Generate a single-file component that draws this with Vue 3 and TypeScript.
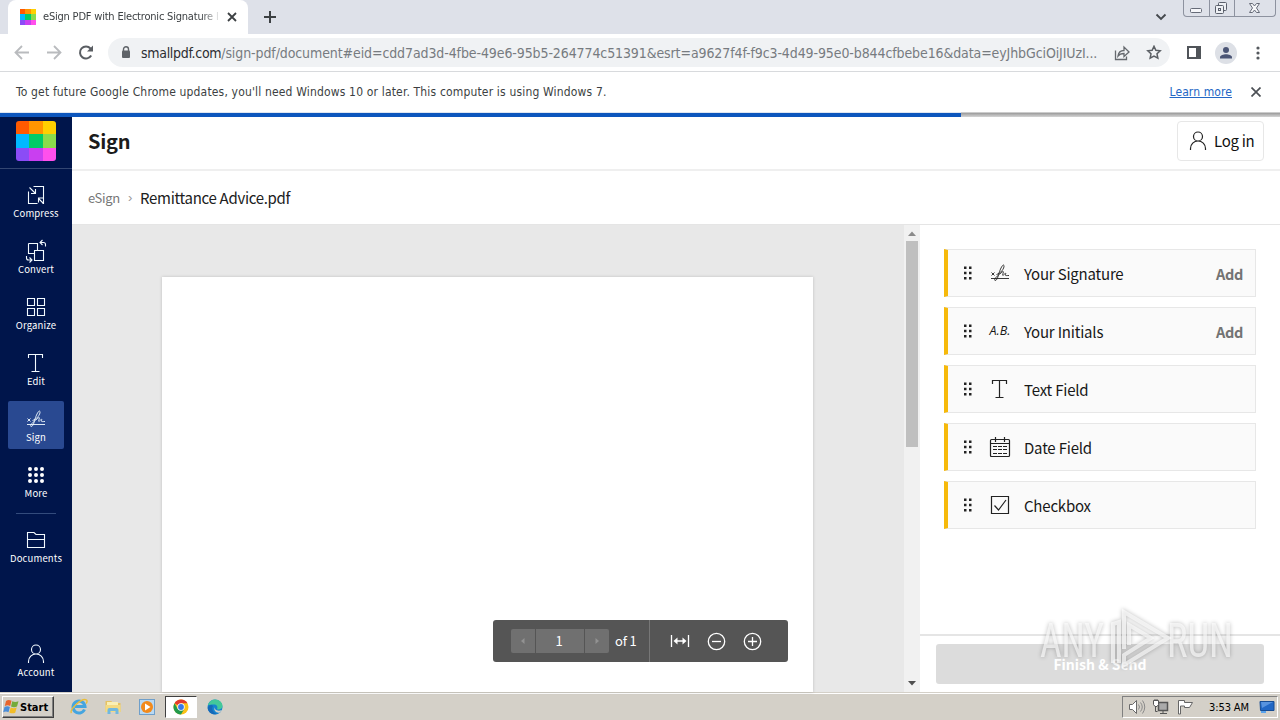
<template>
  <div class="screen">
    <header class="tab-strip">
      <div class="tab">
        <span class="brand brand-small">
          <i v-for="c in brandColors" :key="c" :style="{ background: c }"></i>
        </span>
        <span class="tab-title">eSign PDF with Electronic Signature F</span>
        <svg class="tab-close" width="10" height="10" viewBox="0 0 10 10"><path d="M1 1l8 8M9 1l-8 8" stroke="#3c4043" stroke-width="1.8" /></svg>
      </div>
      <svg class="new-tab" width="12" height="12" viewBox="0 0 12 12"><path d="M6 0v12M0 6h12" stroke="#3c4043" stroke-width="2" /></svg>
      <svg class="tab-search" width="12" height="8" viewBox="0 0 12 8"><path d="M1.5 1.5L6 6l4.500-4.500" fill="none" stroke="#45494e" stroke-width="1.9" /></svg>
      <div class="win-controls">
        <span class="win-btn"><svg width="25" height="16" viewBox="0 0 25 16"><rect x="6.500" y="8.500" width="11" height="4" rx="1" fill="#f5f6f9" stroke="#666b78" /></svg></span>
        <span class="win-btn"><svg width="24" height="16" viewBox="0 0 24 16" fill="#eef0f4" stroke="#5b606c"><rect x="8.500" y="2.500" width="8" height="8" rx="1" /><rect x="5.500" y="5.500" width="8" height="8" rx="1" /><rect x="8.500" y="8.500" width="2" height="2" /></svg></span>
        <span class="win-btn"><svg width="41" height="16" viewBox="0 0 41 16"><path d="M14.500 3.500h3l2 2.500 2-2.500h3l-3 4.500 3 4.500h-3l-2-2.500-2 2.500h-3l3-4.500z" fill="#f5f6f9" stroke="#666b78" /></svg></span>
      </div>
    </header>

    <div class="address-row">
      <svg class="nav-icon" width="16" height="16" viewBox="0 0 16 16"><path d="M15 7.500H2M8 1L1.500 7.500 8 14" fill="none" stroke="#b9bbbe" stroke-width="1.800" /></svg>
      <svg class="nav-icon" width="16" height="16" viewBox="0 0 16 16"><path d="M1 7.500h13M8 1L14.500 7.500 8 14" fill="none" stroke="#b9bbbe" stroke-width="1.800" /></svg>
      <svg class="nav-icon" width="16" height="16" viewBox="0 0 16 16"><path d="M13.200 10.500A6 6 0 1 1 12.500 3.500L14 5" fill="none" stroke="#5a5e63" stroke-width="2" /><path d="M15 .5v6H9z" fill="#5a5e63" /></svg>
      <div class="omnibox">
        <svg width="10" height="13" viewBox="0 0 10 13"><rect x="1" y="4.500" width="8" height="7.500" rx="1" fill="#5f6368" /><path d="M2.500 5V3.300a2.500 2.500 0 0 1 5 0V5" fill="none" stroke="#5f6368" stroke-width="1.400" /></svg>
        <span class="url"><b>smallpdf.com</b>/sign-pdf/document#eid=cdd7ad3d-4fbe-49e6-95b5-264774c51391&amp;esrt=a9627f4f-f9c3-4d49-95e0-b844cfbebe16&amp;data=eyJhbGciOiJIUzI...</span>
        <svg class="share" width="16" height="16" viewBox="0 0 16 16" fill="none" stroke="#65696e" stroke-width="1.300"><path d="M1.500 5.500v9h11v-3" /><path d="M4 11c.5-4 3-5.500 6-5.500V2l5 5-5 4.500V8.500C7.500 8.500 5.500 9 4 11z" /></svg>
        <svg class="star" width="16" height="16" viewBox="0 0 16 16"><path d="M8 1.300l1.850 4 4.350.5-3.200 3 .85 4.300L8 11l-3.850 2.100.85-4.300-3.200-3 4.350-.5z" fill="none" stroke="#5a5e63" stroke-width="1.500" /></svg>
      </div>
      <svg class="side-panel" width="14" height="14" viewBox="0 0 14 14"><rect x="1" y="1" width="12" height="11" fill="none" stroke="#505459" stroke-width="2" /><path d="M9 1h4v11H9z" fill="#505459" /></svg>
      <svg class="avatar" width="22" height="22" viewBox="0 0 22 22"><circle cx="11" cy="11" r="11" fill="#dde0e6" /><circle cx="11" cy="8" r="3" fill="#4b5575" /><path d="M5 16.500v-1.300c0-2 3.500-3 6-3s6 1 6 3v1.300z" fill="#4b5575" /></svg>
      <svg class="kebab" width="4" height="14" viewBox="0 0 4 14" fill="#55595e"><circle cx="2" cy="2" r="1.600" /><circle cx="2" cy="7" r="1.600" /><circle cx="2" cy="12" r="1.600" /></svg>
    </div>

    <div class="infobar">
      <span class="info-text">To get future Google Chrome updates, you'll need Windows 10 or later. This computer is using Windows 7.</span>
      <a class="learn-more">Learn more</a>
      <svg width="10" height="10" viewBox="0 0 10 10"><path d="M.5.5l9 9M9.500.5l-9 9" stroke="#4c5055" stroke-width="1.700" /></svg>
    </div>
    <div class="progress"><div class="progress-value" :style="{ width: progress + 'px' }"></div></div>

    <div class="app">
      <nav class="sidebar">
        <div class="logo">
          <span class="brand">
            <i v-for="c in brandColors" :key="c" :style="{ background: c }"></i>
          </span>
        </div>
        <div class="tools">
          <a v-for="tool in tools" :key="tool.label" class="tool" :class="{ active: tool.label === 'Sign' }">
            <svg width="24" height="24" viewBox="0 0 24 24" :class="tool.icon"><path :d="icons[tool.icon]" /></svg>
            <span>{{ tool.label }}</span>
          </a>
        </div>
        <div class="separator"></div>
        <a class="tool">
          <svg width="24" height="24" viewBox="0 0 24 24"><path :d="icons.folder" /></svg>
          <span>Documents</span>
        </a>
        <a class="tool account">
          <svg width="24" height="24" viewBox="0 0 24 24"><path :d="icons.user" /></svg>
          <span>Account</span>
        </a>
      </nav>

      <main class="main">
        <div class="title-bar">
          <h1>Sign</h1>
          <button class="login">
            <svg width="24" height="24" viewBox="0 0 24 24"><path :d="icons.user" /></svg>
            <span>Log in</span>
          </button>
        </div>
        <div class="breadcrumb">
          <span class="crumb">eSign</span>
          <span class="chevron">›</span>
          <span class="file">Remittance Advice.pdf</span>
        </div>
        <div class="workspace">
          <div class="viewer">
            <div class="canvas"><div class="sheet"></div></div>
            <div class="scrollbar">
              <svg width="16" height="16" viewBox="0 0 16 16"><path d="M4 11l4-4.500 4 4.500z" fill="#8b8b8b" /></svg>
              <div class="thumb"></div>
              <svg width="16" height="16" viewBox="0 0 16 16"><path d="M4 5l4 4.500L12 5z" fill="#505050" /></svg>
            </div>
            <div class="page-controls">
              <div class="pager">
                <span class="step"><svg width="6" height="8" viewBox="0 0 6 8"><path d="M4.500 1v6L1 4z" fill="#929292" /></svg></span>
                <span class="page-no">1</span>
                <span class="step"><svg width="6" height="8" viewBox="0 0 6 8"><path d="M1.500 1v6L5 4z" fill="#929292" /></svg></span>
              </div>
              <span class="total">of 1</span>
              <div class="zoom">
                <svg width="20" height="20" viewBox="0 0 20 20"><path d="M1.500 4v12M18.500 4v12M5 10h10" /><path d="M3.500 10l4-3.500v7zM16.500 10l-4-3.500v7z" fill="#fff" stroke="none" /></svg>
                <svg width="20" height="20" viewBox="0 0 20 20"><circle cx="10.500" cy="10.500" r="8.200" /><path d="M6 10.500h9" /></svg>
                <svg width="20" height="20" viewBox="0 0 20 20"><circle cx="10.500" cy="10.500" r="8.200" /><path d="M6 10.500h9M10.500 6v9" /></svg>
              </div>
            </div>
          </div>

          <aside class="panel">
            <div class="fields">
              <div v-for="field in fields" :key="field.label" class="field">
                <svg class="grip" width="10" height="16" viewBox="0 0 10 16"><path d="M1 1.500h2.500v2.500H1zM6 1.500h2.500v2.500H6zM1 6.700h2.500v2.500H1zM6 6.700h2.500v2.500H6zM1 12h2.500v2.500H1zM6 12h2.500v2.500H6z" fill="#222" /></svg>
                <span v-if="field.icon === 'initials'" class="initials">A.B.</span>
                <svg v-else class="field-icon" :class="field.icon" width="24" height="24" viewBox="0 0 24 24"><path :d="icons[field.icon]" /></svg>
                <span class="field-label">{{ field.label }}</span>
                <span v-if="field.addable" class="add">Add</span>
              </div>
            </div>
            <div class="panel-footer"><button class="finish">Finish &amp; Send</button></div>
          </aside>
        </div>
      </main>
    </div>

    <footer class="taskbar">
      <button class="start">
        <svg width="17" height="16" viewBox="0 0 17 16"><path d="M3 2c2-1.500 3.500-1.200 5.500-.2L7.200 7C5.500 6 4 6 1.800 7z" fill="#e8642c" /><path d="M9.300 2.200c2 1 3.800 1 6.200 0L14 7.500c-2.200 1-4 .8-6 0z" fill="#75ab3c" /><path d="M1.500 8c2-1 3.600-1 5.400 0l-1.400 5.200c-1.800-1-3.300-1-5.300 0z" fill="#4a8dd8" /><path d="M7.700 8.500c2 .9 3.800.9 6 0l-1.500 5.200c-2 1-4 .8-5.900-.2z" fill="#f2bd28" /></svg>
        <span>Start</span>
      </button>
      <div class="launchers">
        <span class="launcher"><svg width="18" height="18" viewBox="0 0 18 18"><path d="M14.500 11.500A6 6 0 1 1 15 8.500H5" fill="none" stroke="#45a5df" stroke-width="3" /><path d="M1.500 15C-1 12 12-1 16.500 2c1 1 .4 2.500-.3 3.500" fill="none" stroke="#e9bd39" stroke-width="1.400" /></svg></span>
        <span class="launcher"><svg width="18" height="18" viewBox="0 0 18 18"><path d="M1.500 3h6l1 2h8v9h-15z" fill="#e6c262" /><path d="M3 4h11v4H3z" fill="#f9efb5" /><path d="M1.500 7h15v7h-15z" fill="#f3da83" /><path d="M3.500 16v-4q0-2 2-2h7q2 0 2 2v4h-3v-3h-5v3z" fill="#71b8df" /></svg></span>
        <span class="launcher"><svg width="18" height="18" viewBox="0 0 18 18"><rect x="1.500" y="1.500" width="15" height="15" fill="#b9d9f3" stroke="#6f9fca" /><circle cx="9" cy="9" r="6" fill="#f28a1c" /><path d="M7 5.500v7L12.500 9z" fill="#fff" /></svg></span>
        <span class="launcher pressed"><svg width="16" height="16" viewBox="0 0 16 16"><circle cx="8" cy="8" r="7.500" fill="#fbc116" /><path d="M8 8L1.500 4.250A7.500 7.500 0 0 1 14.500 4.250H8z" fill="#e33b2e" /><path d="M1.500 4.250A7.500 7.500 0 0 0 8 15.500l3.200-5.600H4.750z" fill="#229a4c" /><circle cx="8" cy="8" r="3.700" fill="#fff" /><circle cx="8" cy="8" r="2.900" fill="#3979e8" /></svg></span>
        <span class="launcher"><svg width="16" height="16" viewBox="0 0 16 16"><circle cx="8" cy="8" r="7.500" fill="#1583cf" /><path d="M.8 6.200C2 2.500 5 .5 8 .5c4.500 0 7.500 3 7.500 6.500 0 3-3 4-5.500 3.200 1.500-3-1-5-3.500-4.700C4 5.600 2 6 .8 6.200z" fill="#43c89a" /><path d="M6 7c-2 3 0 7 4 8-5 1.500-9-2-9.300-6C1.500 6 4.500 5 6 7z" fill="#1669b8" /><path d="M8 8c-1 2 2 5 7 3l-2 2.500c-4 1-7-2.500-5-5.500z" fill="#d4d0c8" /></svg></span>
      </div>
      <div class="tray">
        <svg width="18" height="16" viewBox="0 0 18 16" fill="#fff" stroke="#696969"><path d="M1.500 5.500h3l4-4v13l-4-4h-3z" /><path d="M10.500 5.500q2 2.500 0 5M12.500 3.500q3.500 4.500 0 9M14.500 1.500q4.500 6.500 0 13" fill="none" stroke="#8a8a8a" /></svg>
        <svg width="18" height="16" viewBox="0 0 18 16" fill="#fff" stroke="#555"><path d="M3.500 7v5.500h2" fill="none" /><rect x="6.500" y="3.500" width="9" height="8" stroke-width="1.500" fill="#aaa" /><path d="M1.500 1.500h5v4l-1.500 2h-2l-1.500-2zM3 1v-1M5 1v-1M8 14.500h7M11 12v2" /></svg>
        <svg width="18" height="16" viewBox="0 0 18 16" fill="#fff" stroke="#666"><path d="M2.500 15V1.500h6v2h8l-3 5h-5v-1.500h-4V15z" /></svg>
        <span class="clock">3:53 AM</span>
        <svg class="desktop" width="16" height="14" viewBox="0 0 16 14"><path d="M1 1.500h14v9H1.500z" fill="#2167c5" stroke="#164c93" /><path d="M2 2h12L3 8z" fill="#5793df" /><path d="M2 12h5" stroke="#5ba4ec" stroke-width="2" /></svg>
      </div>
    </footer>

    <svg class="watermark" width="220" height="76" viewBox="0 0 220 76">
      <text x="5" y="55" textLength="64" lengthAdjust="spacingAndGlyphs">ANY</text>
      <path d="M78 61V22l6-2v41M89 47V10l44 26-44 27v-10l27-17-22-13v20" />
      <text x="132" y="55" textLength="66" lengthAdjust="spacingAndGlyphs">RUN</text>
    </svg>
  </div>
</template>

<script lang="ts" setup>
import { ref } from 'vue'

interface Tool {
  label: string
  icon: string
}

interface Field {
  label: string
  icon: string
  addable?: boolean
}

const progress = ref(961)

const brandColors = [
  '#ff5a00', '#ff9500', '#ffd000',
  '#00b8ff', '#00cc66', '#8bdc4b',
  '#8b4cf6', '#c93ff0', '#ff50ec'
]

const icons: Record<string, string> = {
  compress: 'M9.500 3.500h10v9M4.500 8.500v12h9M19.500 12.500v8h-1M5.500 4.500l6 6M11.500 6v4.500h-4.500M19.500 20.500l-5-5M14.500 19.500v-4.500h4.500',
  convert: 'M4.500 4.500h9v7M10.500 14.500h-6v-10M10.500 11.500h9v10h-9zM21.500 7.500v-2q0-2-2-2h-3M18.500 1L16 3.500 18.500 6M2.500 17v2q0 2 2 2h3M5.500 18.500L8 21l-2.500 2.500',
  organize: 'M3.500 3.500h7v7h-7zM13.500 3.500h7v7h-7zM3.500 13.500h7v7h-7zM13.500 13.500h7v7h-7z',
  text: 'M4.500 7V3.500h14V7M11.500 3.500v17M7.500 20.500h8',
  sign: 'M3 17.500h18M3.500 11.500l3 3M6.500 11.500l-3 3M8.500 13.500c4-1 8-6 7.500-9-1-2-3.500 3-5 7.500-1 4-2 7.500-4 7.500-1.500-1 2-4.500 6-7.500 2-2 3-2 2 .5-1 2.500 0 2 1 1 1.500-1.500 2.500-1.500 1.500 0-.5 1.500 1 1 3.500 1',
  more: 'M4 6a2 2 0 1 1 4 0a2 2 0 1 1-4 0M10 6a2 2 0 1 1 4 0a2 2 0 1 1-4 0M16 6a2 2 0 1 1 4 0a2 2 0 1 1-4 0M4 12a2 2 0 1 1 4 0a2 2 0 1 1-4 0M10 12a2 2 0 1 1 4 0a2 2 0 1 1-4 0M16 12a2 2 0 1 1 4 0a2 2 0 1 1-4 0M4 18a2 2 0 1 1 4 0a2 2 0 1 1-4 0M10 18a2 2 0 1 1 4 0a2 2 0 1 1-4 0M16 18a2 2 0 1 1 4 0a2 2 0 1 1-4 0',
  folder: 'M3.500 19.500v-15h6.500l2 2h8.500v13zM3.500 11.500h17',
  user: 'M12 3a4.500 4.500 0 0 1 0 9a4.500 4.500 0 0 1 0-9M4.500 21v-1.500a7.500 7.500 0 0 1 15 0V21',
  calendar: 'M3.500 4.500h17q1 0 1 1v15q0 1-1 1h-17q-1 0-1-1v-15q0-1 1-1zM2.500 8.500h19M7.500 2v5M16.500 2v5M5 11.500h4M10 11.500h4M15 11.500h4M5 14.500h4M10 14.500h4M15 14.500h4M5 18.500h4M10 18.500h4M15 18.500h4',
  checkbox: 'M3.500 3.500h17v17h-17zM6.500 12.500l4 4.500 7.500-10'
}

const tools = ref<Tool[]>([
  { label: 'Compress', icon: 'compress' },
  { label: 'Convert', icon: 'convert' },
  { label: 'Organize', icon: 'organize' },
  { label: 'Edit', icon: 'text' },
  { label: 'Sign', icon: 'sign' },
  { label: 'More', icon: 'more' }
])

const fields = ref<Field[]>([
  { label: 'Your Signature', icon: 'sign', addable: true },
  { label: 'Your Initials', icon: 'initials', addable: true },
  { label: 'Text Field', icon: 'text' },
  { label: 'Date Field', icon: 'calendar' },
  { label: 'Checkbox', icon: 'checkbox' }
])
</script>

<style>
body {
  margin: 0;
  overflow: hidden;
}
</style>

<style scoped>
* {
  box-sizing: border-box;
}

.screen {
  position: relative;
  width: 1280px;
  height: 720px;
  display: flex;
  flex-direction: column;
  background: #fff;
  font-family: "DejaVu Sans Condensed", "DejaVu Sans", sans-serif;
  font-stretch: condensed;
  overflow: hidden;
  white-space: nowrap;
}

svg {
  display: block;
  flex: none;
}

button {
  font-family: inherit;
  margin: 0;
  padding: 0;
}

/* Browser */
.tab-strip {
  height: 34px;
  flex: none;
  display: flex;
  align-items: center;
  padding-left: 8px;
  background: #dee1e9;
}

.tab {
  width: 240px;
  height: 34px;
  display: flex;
  align-items: center;
  padding-left: 12px;
  background: #fff;
  border-radius: 8px 8px 0 0;
}

.brand {
  display: grid;
  grid-template-columns: 13px 14px 13px;
  grid-template-rows: 13px 14px 13px;
  width: 40px;
  height: 40px;
  border-radius: 3px;
  overflow: hidden;
  flex: none;
}

.brand-small {
  grid-template-columns: 5px 6px 5px;
  grid-template-rows: 5px 6px 5px;
  width: 16px;
  height: 16px;
  border-radius: 0;
}

.tab-title {
  width: 175px;
  margin-left: 7px;
  overflow: hidden;
  font-size: 11px;
  line-height: 16px;
  letter-spacing: -0.2px;
  color: #3c4043;
  -webkit-mask-image: linear-gradient(90deg, #000 158px, transparent 178px);
  mask-image: linear-gradient(90deg, #000 158px, transparent 178px);
}

.tab-close {
  margin-left: 9px;
}

.new-tab {
  margin-left: 16px;
}

.tab-search {
  margin-left: auto;
}

.win-controls {
  align-self: flex-start;
  display: flex;
  width: 93px;
  height: 17px;
  margin: 0 4px 0 16px;
  border: 1px solid #8d929f;
  border-top: none;
  border-radius: 0 0 4px 4px;
}

.win-btn + .win-btn {
  border-left: 1px solid #8d929f;
}

.address-row {
  height: 38px;
  flex: none;
  display: flex;
  align-items: center;
  padding: 0 20px 0 14px;
  border-bottom: 1px solid #d8dadd;
}

.nav-icon {
  margin-right: 16px;
}

.omnibox {
  width: 1062px;
  height: 29px;
  display: flex;
  align-items: center;
  margin-left: -2px;
  padding: 0 8px 0 13px;
  border-radius: 15px;
  background: #f0f2f4;
}

.url {
  width: 957px;
  margin-left: 10px;
  font-size: 14px;
  line-height: 20px;
  letter-spacing: -0.1px;
  color: #777b80;
}

.url b {
  font-weight: 400;
  letter-spacing: -0.3px;
  color: #2c2e31;
}

.share {
  margin-left: 16px;
}

.star {
  margin-left: auto;
}

.side-panel {
  margin-left: 17px;
}

.avatar {
  margin-left: 14px;
}

.kebab {
  margin-left: auto;
}

.infobar {
  height: 40px;
  flex: none;
  display: flex;
  align-items: center;
  padding: 0 19px 0 16px;
  font-size: 12px;
  line-height: 16px;
  color: #3c3f42;
}

.info-text {
  letter-spacing: 0.165px;
}

.learn-more {
  margin-left: auto;
  margin-right: 19px;
  letter-spacing: 0.1px;
  color: #2467c5;
  text-decoration: underline;
}

.progress {
  height: 5px;
  flex: none;
  background: linear-gradient(#fff 0, #999 1px, #aaa 2px, #d5d5d5 5px);
}

.progress-value {
  height: 5px;
  background: #0d56bd;
  border-top: 1px solid #dfe6f1;
}

/* Smallpdf */
.app {
  height: 575px;
  flex: none;
  display: flex;
  font-family: "Noto Sans CJK SC", "Noto Sans", sans-serif;
}

.sidebar {
  width: 72px;
  flex: none;
  display: flex;
  flex-direction: column;
  padding-bottom: 8px;
  background: #00154b;
}

.logo {
  height: 52px;
  padding: 4px 16px 0;
  border-bottom: 1px solid #334672;
}

.tools {
  display: flex;
  flex-direction: column;
  gap: 8px;
  padding-top: 8px;
}

.tool {
  width: 56px;
  height: 48px;
  display: flex;
  flex-direction: column;
  align-items: center;
  margin: 0 8px;
  padding-top: 6px;
  border-radius: 2px;
  color: #fff;
  font-size: 9.500px;
  line-height: 12px;
  letter-spacing: 0.150px;
}

.tool svg {
  fill: none;
  stroke: #f2faff;
  stroke-width: 1.100;
}

.tool svg.more {
  fill: #fff;
  stroke: none;
}

.tool.active {
  background: #294991;
}

.separator {
  height: 1px;
  margin: 8px 16px;
  background: #334b7c;
}

.tool.account {
  margin-top: auto;
}

.main {
  flex: 1;
  display: flex;
  flex-direction: column;
  min-width: 0;
}

.title-bar {
  height: 54px;
  flex: none;
  display: flex;
  align-items: center;
  justify-content: space-between;
  padding: 0 16px 4px;
  border-bottom: 2px solid #efefef;
}

.title-bar h1 {
  margin: 0;
  font-size: 20px;
  line-height: 28px;
  font-weight: 700;
  letter-spacing: -0.25px;
  color: #1b1b1b;
}

.login {
  width: 87px;
  height: 40px;
  display: flex;
  align-items: center;
  gap: 4px;
  padding-left: 8px;
  border: 1px solid #e7e7e7;
  border-radius: 4px;
  background: #fff;
  font-size: 15px;
  line-height: 20px;
  letter-spacing: -0.3px;
  color: #111;
}

.login svg,
.field-icon {
  fill: none;
  stroke: #222;
  stroke-width: 1.200;
}

.field-icon.sign,
.tool svg.sign {
  stroke-width: 0.900;
}

.breadcrumb {
  height: 54px;
  flex: none;
  display: flex;
  align-items: center;
  padding: 0 16px;
  border-bottom: 1px solid #e5e5e5;
  line-height: 20px;
}

.crumb {
  width: 32px;
  font-size: 13px;
  letter-spacing: -0.3px;
  color: #777;
}

.chevron {
  width: 20px;
  padding-left: 8px;
  font-family: "Liberation Sans", sans-serif;
  font-size: 13px;
  color: #999;
}

.file {
  font-size: 15px;
  letter-spacing: -0.3px;
  color: #202020;
}

.workspace {
  flex: 1;
  display: flex;
  min-height: 0;
}

.viewer {
  position: relative;
  width: 848px;
  display: flex;
}

.canvas {
  width: 832px;
  display: flex;
  padding: 52px 91px 0 90px;
  background: #e8e8e8;
}

.sheet {
  flex: 1;
  background: #fff;
  box-shadow: 0 0 3px rgba(0, 0, 0, 0.18);
}

.scrollbar {
  width: 16px;
  display: flex;
  flex-direction: column;
  background: #f1f1f1;
}

.thumb {
  width: 12px;
  height: 206px;
  margin: 0 2px auto;
  background: #bfbfbf;
}

.page-controls {
  position: absolute;
  left: 421px;
  bottom: 30px;
  width: 295px;
  height: 42px;
  display: flex;
  align-items: center;
  padding-left: 18px;
  border-radius: 3px;
  background: #555;
  color: #fff;
}

.pager {
  display: flex;
  gap: 1px;
  border-radius: 2px;
  overflow: hidden;
}

.pager span {
  height: 24px;
  display: flex;
  align-items: center;
  justify-content: center;
  background: #707070;
  font-size: 13px;
}

.pager .step {
  width: 24px;
}

.pager .page-no {
  width: 48px;
  padding: 0 2px 1px 0;
}

.total {
  width: 40px;
  padding: 0 0 1px 6px;
  font-size: 13px;
  letter-spacing: -0.2px;
}

.zoom {
  height: 42px;
  display: flex;
  align-items: center;
  gap: 16px;
  padding-left: 20px;
  border-left: 1px solid #777;
}

.zoom svg {
  fill: none;
  stroke: #fff;
  stroke-width: 1.300;
}

.panel {
  flex: 1;
  display: flex;
  flex-direction: column;
  background: #fff;
}

.fields {
  flex: 1;
  display: flex;
  flex-direction: column;
  gap: 10px;
  padding: 24px 24px 0;
}

.field {
  height: 48px;
  display: flex;
  align-items: center;
  padding: 0 12px 0 15px;
  border: 1px solid #e7e7e7;
  border-left: 4px solid #f6b90b;
  background: #fafafa;
  font-size: 15px;
  line-height: 20px;
  letter-spacing: -0.2px;
  color: #181818;
}

.field-icon,
.initials {
  width: 24px;
  margin: 0 12px 0 15px;
}

.initials {
  font-family: "Open Sans", sans-serif;
  font-stretch: normal;
  font-size: 12.500px;
  font-style: italic;
  letter-spacing: 0;
  text-align: center;
}

.field-label {
  padding-top: 1px;
}

.add {
  margin-left: auto;
  padding-top: 1px;
  font-size: 14.500px;
  font-weight: 700;
  letter-spacing: -0.3px;
  color: #737373;
}

.panel-footer {
  height: 58px;
  flex: none;
  padding: 8px 16px;
  border-top: 2px solid #e5e5e5;
}

.finish {
  width: 328px;
  height: 40px;
  border: none;
  border-radius: 3px;
  background: #dcdcdc;
  color: #fff;
  font-size: 14px;
  font-weight: 700;
}

/* Windows taskbar */
.taskbar {
  height: 28px;
  display: flex;
  align-items: center;
  padding: 1px 2px 0;
  border-top: 1px solid #d4d0c8;
  background: #d4d0c8;
  box-shadow: inset 0 1px #fff;
}

.start {
  width: 52px;
  height: 22px;
  display: flex;
  align-items: center;
  border: 1px solid;
  border-color: #fff #404040 #404040 #fff;
  box-shadow: inset -1px -1px #808080;
  background: #d4d0c8;
  color: #000;
  font-size: 11px;
  font-weight: 700;
}

.launchers {
  display: flex;
  margin-left: 9px;
  gap: 2px;
}

.launcher {
  width: 32px;
  height: 22px;
  display: flex;
  align-items: center;
  justify-content: center;
}

.launcher.pressed {
  border: 1px solid;
  border-color: #404040 #fff #fff #404040;
  background: #fff;
}

.tray {
  width: 156px;
  height: 22px;
  display: flex;
  align-items: center;
  gap: 6px;
  margin-left: auto;
  padding-left: 5px;
  border: 1px solid;
  border-color: #808080 #fff #fff #808080;
}

.clock {
  margin-left: 9px;
  font-size: 11px;
  letter-spacing: -0.1px;
  color: #000;
}

.desktop {
  margin-left: 4px;
}

.watermark {
  position: absolute;
  left: 1035px;
  top: 602px;
  fill: rgba(255, 255, 255, 0.65);
  filter: drop-shadow(0 0 2px rgba(0, 0, 0, 0.4));
  pointer-events: none;
}

.watermark text {
  font-family: Roboto, sans-serif;
  font-size: 48px;
}

.watermark path {
  fill: none;
  stroke: rgba(255, 255, 255, 0.65);
  stroke-width: 4;
}
</style>
